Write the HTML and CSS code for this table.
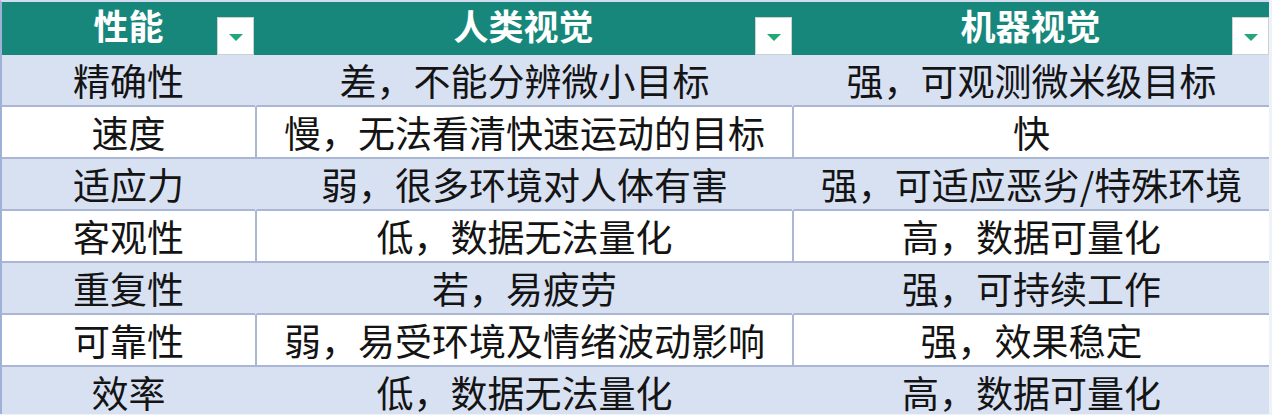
FILE: index.html
```html
<!DOCTYPE html>
<html lang="zh">
<head>
<meta charset="utf-8">
<title>人类视觉与机器视觉</title>
<link rel="stylesheet" href="styles.css">
</head>
<body>
<div class="sheet">
  <div class="table">
    <div class="cell head c1">性能<span class="drop"><span class="tri"></span></span></div>
    <div class="cell head c2">人类视觉<span class="drop"><span class="tri"></span></span></div>
    <div class="cell head c3">机器视觉<span class="drop"><span class="tri"></span></span></div>

    <div class="cell band c1">精确性</div>
    <div class="cell band c2">差，不能分辨微小目标</div>
    <div class="cell band c3">强，可观测微米级目标</div>

    <div class="cell plain c1">速度</div>
    <div class="cell plain c2">慢，无法看清快速运动的目标</div>
    <div class="cell plain c3">快</div>

    <div class="cell band c1">适应力</div>
    <div class="cell band c2">弱，很多环境对人体有害</div>
    <div class="cell band c3">强，可适应恶劣/特殊环境</div>

    <div class="cell plain c1">客观性</div>
    <div class="cell plain c2">低，数据无法量化</div>
    <div class="cell plain c3">高，数据可量化</div>

    <div class="cell band c1">重复性</div>
    <div class="cell band c2">若，易疲劳</div>
    <div class="cell band c3">强，可持续工作</div>

    <div class="cell plain c1">可靠性</div>
    <div class="cell plain c2">弱，易受环境及情绪波动影响</div>
    <div class="cell plain c3">强，效果稳定</div>

    <div class="cell band c1 last">效率</div>
    <div class="cell band c2 last">低，数据无法量化</div>
    <div class="cell band c3 last">高，数据可量化</div>
  </div>
</div>
</body>
</html>
```

FILE: styles.css
```css
html, body {
  margin: 0;
  padding: 0;
  background: #ffffff;
}

.sheet {
  width: 1272px;
  height: 415px;
  overflow: hidden;
  background: #eef2fa;
}

.table {
  display: grid;
  grid-template-columns: 253px 537px 477px;
  grid-template-rows: 53px repeat(6, 52px) 47px;
  width: 1267px;
  border-left: 2px solid #9fb1d6;
  border-top: 2px solid #d3dcee;
  font-family: "Noto Sans CJK SC", "Noto Sans", sans-serif;
}

.cell {
  box-sizing: border-box;
  display: flex;
  align-items: center;
  justify-content: center;
  font-size: 37px;
  line-height: 1;
  color: #141414;
  white-space: nowrap;
  border-bottom: 2px solid #a9b7d4;
}

.cell.last {
  border-bottom: 0;
  padding-top: 3px;
}

.head {
  position: relative;
  background: #17877b;
  color: #ffffff;
  font-weight: 700;
  font-size: 35px;
  padding-bottom: 8px;
  border-bottom: 0;
}

.band {
  background: #d8e1f2;
}

.plain {
  background: #ffffff;
}

.plain.c2,
.plain.c3 {
  border-left: 2px solid #abb8d2;
}

.band.c2,
.band.c3 {
  border-left: 2px solid #d8e1f2;
}

.drop {
  position: absolute;
  right: 1px;
  bottom: 0;
  width: 37px;
  height: 38px;
  box-sizing: border-box;
  background: #ffffff;
  border: 1px solid #c9d3d0;
  display: flex;
  align-items: center;
  justify-content: center;
}

.head.c2 .drop,
.head.c3 .drop {
  right: 0;
}

.tri {
  width: 0;
  height: 0;
  margin-top: 3px;
  border-left: 7px solid transparent;
  border-right: 7px solid transparent;
  border-top: 7px solid #22a877;
}
```
